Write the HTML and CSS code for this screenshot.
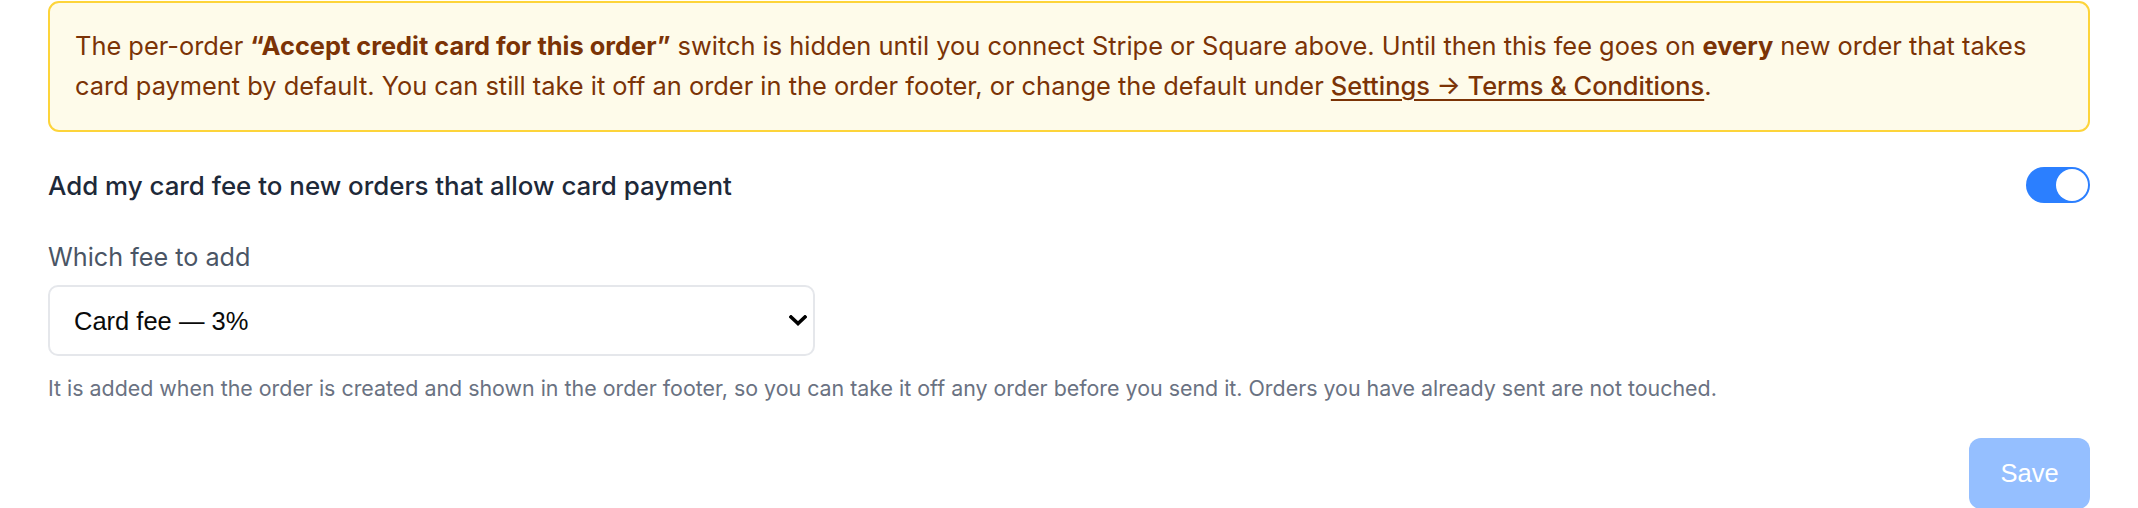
FILE: index.html
```html
<!DOCTYPE html>
<html lang="en">
<head>
<meta charset="utf-8">
<title>Card fee settings</title>
<link rel="stylesheet" href="styles.css">
</head>
<body>
<main class="page">
  <div class="notice">
    The per-order <strong>“Accept credit card for this order”</strong> switch is hidden until you connect Stripe or Square above. Until then this fee goes on <strong>every</strong> new order that takes card payment by default. You can still take it off an order in the order footer, or change the default under <a class="notice-link" href="#">Settings → Terms &amp; Conditions</a>.
  </div>

  <div class="toggle-row">
    <span class="toggle-label">Add my card fee to new orders that allow card payment</span>
    <span class="switch"><span class="knob"></span></span>
  </div>

  <label class="field-label" for="fee">Which fee to add</label>
  <div class="select-wrap">
    <select id="fee" class="select">
      <option>Card fee — 3%</option>
    </select>
    <svg class="chevron" viewBox="0 0 18 11" width="18" height="11" aria-hidden="true">
      <path d="M2 2 L9 8.5 L16 2" fill="none" stroke="#000" stroke-width="3.6" stroke-linecap="square" stroke-linejoin="miter"/>
    </svg>
  </div>
  <p class="help">It is added when the order is created and shown in the order footer, so you can take it off any order before you send it. Orders you have already sent are not touched.</p>

  <div class="actions">
    <button class="save" disabled>Save</button>
  </div>
</main>
</body>
</html>
```

FILE: styles.css
```css
html, body {
  margin: 0;
  padding: 0;
  background: #ffffff;
}

.page {
  padding: 1px 48px 0 48px;
  font-family: Inter, "Noto Sans", sans-serif;
  display: flex;
  flex-direction: column;
}

.notice {
  background: #fefbea;
  border: 2px solid #fdd43a;
  border-radius: 11px;
  padding: 23px 24px 24px 25px;
  color: #7b3306;
  font-size: 25.4px;
  line-height: 40px;
}

.notice strong {
  font-weight: 700;
}

.notice-link {
  color: #7b3306;
  font-weight: 500;
  text-decoration: underline;
  text-underline-offset: 4px;
  text-decoration-thickness: 2px;
}

.toggle-row {
  margin-top: 35px;
  display: flex;
  align-items: center;
  justify-content: space-between;
  height: 36px;
}

.toggle-label {
  font-size: 25.9px;
  font-weight: 500;
  color: #1e2939;
}

.switch {
  width: 64px;
  height: 36px;
  border-radius: 18px;
  background: #2b7fff;
  display: flex;
  align-items: center;
  justify-content: flex-end;
  padding: 0 2px;
  box-sizing: border-box;
}

.knob {
  width: 32px;
  height: 32px;
  border-radius: 50%;
  background: #ffffff;
}

.field-label {
  margin-top: 38px;
  font-size: 25.2px;
  line-height: 33px;
  color: #4a5565;
}

.select-wrap {
  margin-top: 11px;
  width: 767px;
  position: relative;
}

.select {
  appearance: none;
  -webkit-appearance: none;
  width: 100%;
  height: 71px;
  box-sizing: border-box;
  border: 2px solid #e5e7eb;
  border-radius: 10px;
  background: #ffffff;
  padding: 0 50px 0 24px;
  font-family: "Liberation Sans", Arial, sans-serif;
  font-size: 25.5px;
  color: #0a0a0a;
  margin: 0;
}

.chevron {
  position: absolute;
  right: 8px;
  top: 30px;
  pointer-events: none;
}

.help {
  margin: 19px 0 0 0;
  font-size: 21.4px;
  line-height: 27px;
  color: #6a7282;
}

.actions {
  margin-top: 36px;
  display: flex;
  justify-content: flex-end;
}

.save {
  width: 121px;
  height: 71px;
  border: none;
  border-radius: 12px;
  background: #95bfff;
  color: #ffffff;
  font-family: "Liberation Sans", Arial, sans-serif;
  font-size: 25.5px;
  padding: 0;
}
```
